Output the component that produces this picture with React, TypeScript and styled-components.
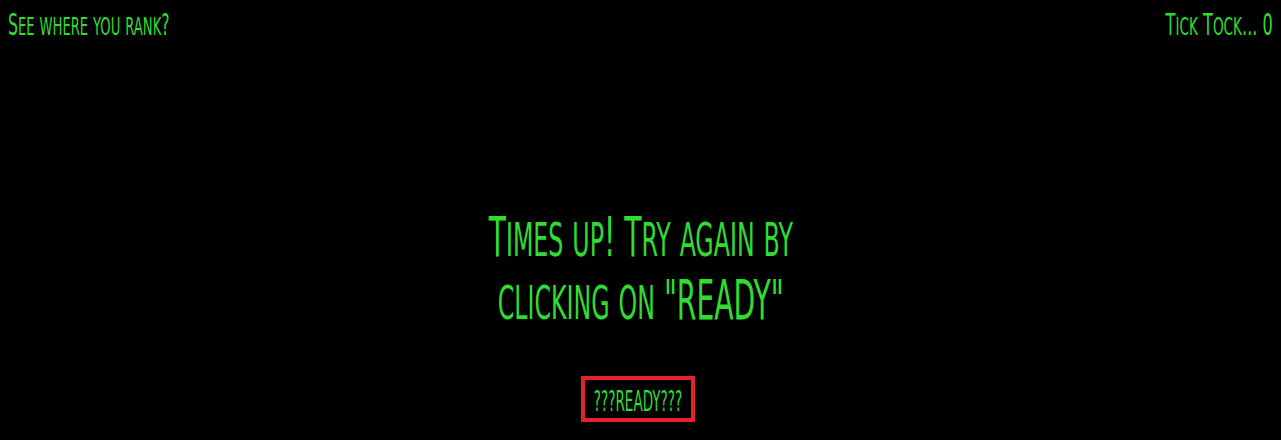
import React from "react";
import styled, { createGlobalStyle } from "styled-components";

const Global = createGlobalStyle`
  html, body { margin: 0; padding: 0; background: #000; }
  body { font-family: "DejaVu Sans Condensed", "DejaVu Sans", sans-serif; overflow: hidden; }
`;

const Page = styled.div`
  width: 1281px;
  height: 440px;
  background: #000;
  color: #2fdc2f;
  display: flex;
  flex-direction: column;
`;

const Header = styled.header`
  display: flex;
  justify-content: space-between;
  padding: 10px 8px 0 8px;
`;

const Label = styled.div<{ $align: "left" | "right"; $scale: number }>`
  font-size: 30px;
  line-height: 30px;
  white-space: nowrap;
  transform: scaleX(${(p) => p.$scale});
  transform-origin: ${(p) => p.$align} center;
`;

const Main = styled.main`
  display: flex;
  flex-direction: column;
  align-items: center;
  padding-top: 166px;
`;

const Message = styled.h1`
  margin: 0;
  font-weight: normal;
  font-size: 55px;
  line-height: 63px;
  text-align: center;
  white-space: nowrap;
  transform: scaleX(0.57);
`;

const Small = styled.span`
  text-transform: uppercase;
  font-size: 0.84em;
  line-height: 0;
`;

const ReadyButton = styled.button`
  margin: 44px 5px 0 0;
  width: 114px;
  height: 46px;
  box-sizing: border-box;
  border: 4px solid #e3222b;
  background: transparent;
  color: #2fdc2f;
  font-family: "DejaVu Sans Condensed", "DejaVu Sans", sans-serif;
  font-size: 29px;
  line-height: 38px;
  padding: 2px 0 0 0;
  display: flex;
  justify-content: center;
  cursor: pointer;
`;

const ButtonText = styled.span`
  display: inline-block;
  white-space: nowrap;
  transform: scaleX(0.52);
`;

function SmallCaps({ text }: { text: string }) {
  const runs = text.match(/[a-z]+|[^a-z]+/g) || [];
  return (
    <>
      {runs.map((r, i) =>
        /[a-z]/.test(r[0]) ? <Small key={i}>{r}</Small> : <React.Fragment key={i}>{r}</React.Fragment>
      )}
    </>
  );
}

export default function App() {
  return (
    <>
      <Global />
      <Page>
        <Header>
          <Label $align="left" $scale={0.58}>
            <SmallCaps text="See where you rank?" />
          </Label>
          <Label $align="right" $scale={0.6}>
            <SmallCaps text="Tick Tock... 0" />
          </Label>
        </Header>
        <Main>
          <Message>
            <SmallCaps text="Times up! Try again by" />
            <br />
            <SmallCaps text={'clicking on "READY"'} />
          </Message>
          <ReadyButton>
            <ButtonText>???READY???</ButtonText>
          </ReadyButton>
        </Main>
      </Page>
    </>
  );
}
